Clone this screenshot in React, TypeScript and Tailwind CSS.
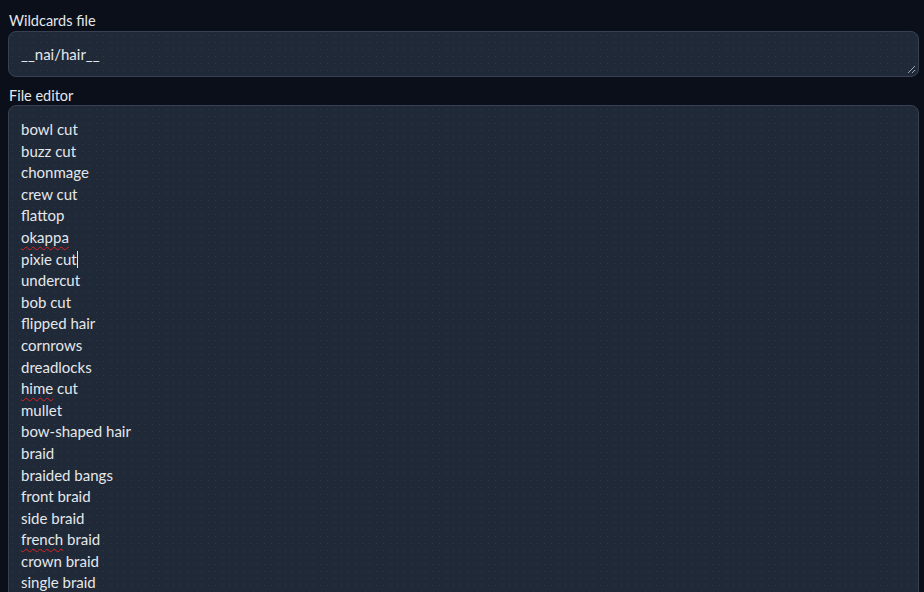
import React from 'react';

const lines: { text: string; typo?: string; caret?: boolean }[] = [
  { text: 'bowl cut' },
  { text: 'buzz cut' },
  { text: 'chonmage' },
  { text: 'crew cut' },
  { text: 'flattop' },
  { text: 'okappa', typo: 'okappa' },
  { text: 'pixie cut', caret: true },
  { text: 'undercut' },
  { text: 'bob cut' },
  { text: 'flipped hair' },
  { text: 'cornrows' },
  { text: 'dreadlocks' },
  { text: 'hime cut', typo: 'hime' },
  { text: 'mullet' },
  { text: 'bow-shaped hair' },
  { text: 'braid' },
  { text: 'braided bangs' },
  { text: 'front braid' },
  { text: 'side braid' },
  { text: 'french braid', typo: 'french' },
  { text: 'crown braid' },
  { text: 'single braid' },
];

// faint dotted texture, as on the gradio dark inputs
const dots =
  'bg-[radial-gradient(circle,rgba(75,85,99,0.4)_0.6px,transparent_1px)] bg-[size:7px_7px]';

const ResizeHandle = () => (
  <svg className="absolute right-[2px] bottom-[2px]" width="10" height="10" viewBox="0 0 10 10">
    <path d="M9 2 L2 9 M9 6 L6 9" stroke="#9ca3af" strokeWidth="1" />
  </svg>
);

const Line = ({ text, typo, caret }: { text: string; typo?: string; caret?: boolean }) => {
  if (typo) {
    const rest = text.slice(typo.length);
    return (
      <div>
        <span className="underline decoration-wavy decoration-[#e02020] decoration-1 underline-offset-[3px]">{typo}</span>
        {rest}
      </div>
    );
  }
  return (
    <div>
      {text}
      {caret && <span className="inline-block w-px h-[17px] bg-gray-200 align-[-3px]" />}
    </div>
  );
};

export default function App() {
  return (
    <div
      className="h-[592px] overflow-hidden bg-[#0b0f19] text-[#e5e7eb] pt-[11px]"
      style={{ fontFamily: 'Lato, "Noto Sans", sans-serif' }}
    >
      <div className="pl-2 w-[919px]">
        <div className="text-[14.5px] leading-[20px] pl-[1px]">Wildcards file</div>
        <div className={`relative h-[46px] rounded-lg border border-[#374151] bg-[#1f2937] ${dots} px-3 flex items-center`}>
          <span className="text-[15px]">__nai/hair__</span>
          <ResizeHandle />
        </div>

        <div className="text-[14.5px] leading-[18px] pl-[1px] mt-[10px]">File editor</div>
        <div className={`relative h-[600px] rounded-lg border border-[#374151] bg-[#1f2937] ${dots} px-3 pt-[13px]`}>
          <div className="text-[15px] leading-[21.6px]">
            {lines.map((l) => (
              <Line key={l.text} {...l} />
            ))}
          </div>
        </div>
      </div>
    </div>
  );
}
